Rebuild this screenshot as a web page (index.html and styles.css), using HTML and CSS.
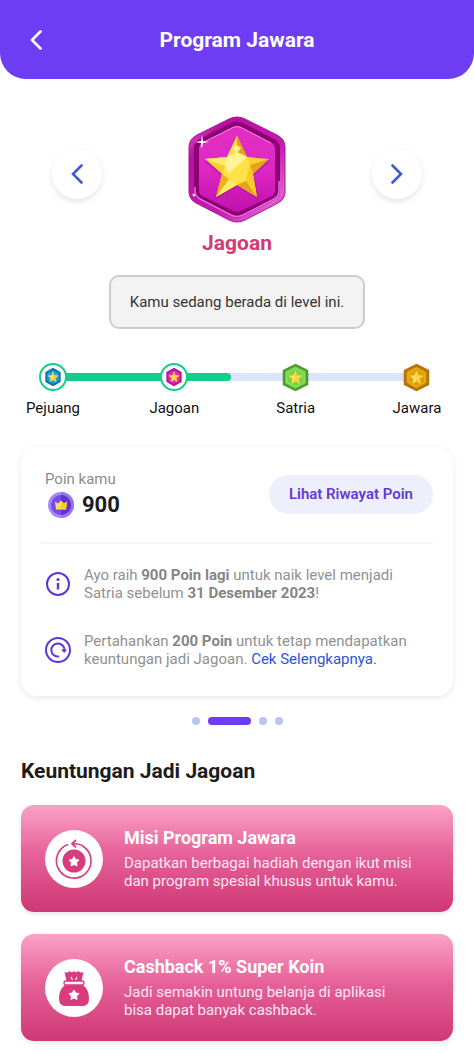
FILE: index.html
```html
<!DOCTYPE html>
<html lang="id">
<head>
<meta charset="utf-8">
<meta name="viewport" content="width=device-width, initial-scale=1">
<title>Program Jawara</title>
<link rel="stylesheet" href="styles.css">
</head>
<body>
<svg class="defs" aria-hidden="true">
  <defs>
    <linearGradient id="rim" x1="0" y1="0" x2="1" y2="1">
      <stop offset="0" stop-color="#e77bd6"/><stop offset=".2" stop-color="#b80fa0"/><stop offset=".6" stop-color="#c51bb0"/><stop offset=".85" stop-color="#e05bd0"/><stop offset="1" stop-color="#a00090"/>
    </linearGradient>
    <linearGradient id="face" x1="0" y1="0" x2="0" y2="1">
      <stop offset="0" stop-color="#e22fc0"/><stop offset=".5" stop-color="#df28c4"/><stop offset="1" stop-color="#c010ad"/>
    </linearGradient>
    <linearGradient id="gold" x1="0" y1="0" x2="0" y2="1">
      <stop offset="0" stop-color="#ffe64f"/><stop offset="1" stop-color="#f5b31b"/>
    </linearGradient>
    <symbol id="star" viewBox="0 0 24 24"><path d="M12 1l3 7.500 8 .6-6.200 5.200 2 7.900L12 18l-6.800 4.200 2-7.900L1 9.100l8-.6z" fill="#ffe052"/><path d="M12 1v12l3-4.500zM23 9.100L12 13l4.800 1.300zM18.800 22.200L12 13v5z" fill="#f8c440"/></symbol>
  </defs>
</svg>

<header class="topbar">
  <button class="back" type="button" aria-label="Kembali">
    <svg width="12" height="20" viewBox="0 0 12 20"><path d="M10.500 1.500L2 10l8.500 8.500" fill="none" stroke="currentColor" stroke-width="2.600" stroke-linecap="round" stroke-linejoin="round"/></svg>
  </button>
  <h1 class="topbar-title">Program Jawara</h1>
</header>

<main>
  <section class="hero">
    <button class="nav" type="button" aria-label="Level sebelumnya">
      <svg width="12" height="20" viewBox="0 0 12 20"><path d="M10.500 1.500L2 10l8.500 8.500" fill="none" stroke="currentColor" stroke-width="2.600" stroke-linecap="round"/></svg>
    </button>
    <div class="level">
      <svg width="98" height="108" viewBox="0 0 98 108" aria-hidden="true">
        <path d="M41 4Q49 0 57 4L89 20Q97 24 97 32V77Q97 84 90 88L57 105Q49 109 41 105L8 88Q1 84 1 77V32Q1 24 9 20Z" fill="url(#rim)" stroke="#ad1399" stroke-width="1"/>
        <path d="M43 8Q49 5 55 8L86 24Q92 27 92 33V76Q92 82 86 85L55 101Q49 104 43 101L12 85Q6 82 6 76V33Q6 27 12 24Z" fill="#8d0074"/>
        <path d="M7 72V76Q7 81 12 84L43 100Q49 103 55 100L86 84Q91 81 91 76V66" fill="none" stroke="#e96bd8" stroke-width="1.500"/>
        <path d="M45 12Q49 10 53 12L84 28Q87 30 87 34V75Q87 79 84 81L53 96Q49 98 45 96L14 81Q11 79 11 75V34Q11 30 14 28Z" fill="url(#face)"/>
        <path d="M12 32Q13 29 16 27L45 12.500Q49 10.500 53 12.500L83 28" fill="none" stroke="#f18ade" stroke-width="1"/>
        <path d="M49 24l11 20 22 2-16 15 5 24-22-13-22 13 6-24-17-15 22-2z" fill="#971098" opacity=".4"/>
        <path d="M49 21l10 21 22 2-16 15 4 23-20-12-21 12 6-23-17-15 22-2z" fill="url(#gold)"/>
        <path d="M49 21v16l10 5zM81 44L62 50l3 9zM69 82L58 66l-9 4z" fill="#e5a31c"/>
        <path d="M17 44l20 7 2-9zM28 82l21-12-8-6z" fill="#ffed69"/>
        <path d="M28 82l6-23 7 5z" fill="#eeb01e"/>
        <path d="M49 21l-10 21 10-5z" fill="#ffe03c"/>
        <path d="M39 42l10-5 10 5 3 8-4 16-9 4-8-6-7-5 3-8z" fill="#ffe14a"/>
        <path d="M39 42l10-5 10 5-18 16-4-7zM45 33l4-3 4 3-4 5z" fill="#fff7a8" opacity=".85"/>
        <path d="M62 50l3 9 4 23-11-16z" fill="#fbcb29"/>
        <path d="M14 20l1 6 6 1-6 1-1 6-1-6-6-1 6-1z" fill="#fff"/>
        <circle cx="6" cy="80" r="1.500" fill="#ffd7fa"/>
      </svg>
      <h2 class="level-name">Jagoan</h2>
    </div>
    <button class="nav" type="button" aria-label="Level berikutnya">
      <svg width="12" height="20" viewBox="0 0 12 20"><path d="M1.500 1.500L10 10l-8.500 8.500" fill="none" stroke="currentColor" stroke-width="2.600" stroke-linecap="round"/></svg>
    </button>
  </section>

  <p class="notice">Kamu sedang berada di level ini.</p>

  <section class="journey" aria-label="Level">
    <div class="track"><div class="track-fill"></div></div>
    <ol class="steps">
      <li class="step"><span class="medal done"><svg width="20" height="20" viewBox="0 0 28 30"><path d="M14 3l10 5.500v13L14 27 4 21.500v-13z" fill="#1ba4de" stroke="#0b74ac" stroke-width="3" stroke-linejoin="round"/><use href="#star" x="5" y="6" width="18" height="18"/></svg></span>Pejuang</li>
      <li class="step"><span class="medal done"><svg width="20" height="20" viewBox="0 0 28 30"><path d="M14 3l10 5.500v13L14 27 4 21.500v-13z" fill="#e22bc0" stroke="#b8159f" stroke-width="3" stroke-linejoin="round"/><use href="#star" x="5" y="6" width="18" height="18"/></svg></span>Jagoan</li>
      <li class="step"><span class="medal"><svg width="27" height="29" viewBox="0 0 28 30"><path d="M14 2l12 6v14l-12 6-12-6V8z" fill="#6fce3e" stroke="#4b9c2c" stroke-width="2.500" stroke-linejoin="round"/><path d="M14 5l9 5v10l-9 5-9-5V10z" fill="#78d546" stroke="#99e66a"/><use href="#star" x="6" y="7" width="16" height="16"/></svg></span>Satria</li>
      <li class="step"><span class="medal"><svg width="27" height="29" viewBox="0 0 28 30"><path d="M14 2l12 6v14l-12 6-12-6V8z" fill="#c98209" stroke="#b47409" stroke-width="2.500" stroke-linejoin="round"/><path d="M14 5l9 5v10l-9 5-9-5V10z" fill="#dea10b" stroke="#f4bd22"/><use href="#star" x="6" y="7" width="16" height="16"/></svg></span>Jawara</li>
    </ol>
  </section>

  <section class="card">
    <div class="points">
      <div>
        <p class="points-label">Poin kamu</p>
        <p class="points-value">
          <svg width="26" height="26" viewBox="0 0 26 26" aria-hidden="true"><circle cx="13" cy="13" r="13" fill="#a986f8"/><path d="M13 0a13 13 0 0 1 0 26z" fill="#9874ef"/><circle cx="13" cy="13" r="10" fill="#7649ea"/><path d="M13 3a10 10 0 0 1 0 20z" fill="#5f32d4"/><path d="M7 9.500l3 2 3-3 3 3 3-2-1 8H8z" fill="#ffe34b"/><path d="M13 8.500l3 3 3-2-1 8h-5z" fill="#fbc928"/></svg>
          900
        </p>
      </div>
      <button class="history" type="button">Lihat Riwayat Poin</button>
    </div>
    <div class="info">
      <svg width="26" height="26" viewBox="0 0 26 26" aria-hidden="true"><circle cx="13" cy="13" r="11" fill="none" stroke="#6035d8" stroke-width="2"/><circle cx="13" cy="8.500" r="1.500" fill="#6035d8"/><path d="M13 12v6.500" stroke="#6035d8" stroke-width="2.400"/></svg>
      <p>Ayo raih <b>900 Poin lagi</b> untuk naik level menjadi<br>Satria sebelum <b>31 Desember 2023</b>!</p>
    </div>
    <div class="info">
      <svg width="26" height="26" viewBox="0 0 26 26" aria-hidden="true"><circle cx="13" cy="13" r="12" fill="none" stroke="#6035d8" stroke-width="2"/><path d="M14 19.500A6.600 6.600 0 1 1 19.500 13" fill="none" stroke="#6035d8" stroke-width="2"/><path d="M16 12.500h6l-2.700 3.500z" fill="#6035d8"/></svg>
      <p>Pertahankan <b>200 Poin</b> untuk tetap mendapatkan<br>keuntungan jadi Jagoan. <a class="more" href="#keuntungan">Cek Selengkapnya.</a></p>
    </div>
  </section>

  <div class="dots" aria-hidden="true"><i class="dot"></i><i class="dot active"></i><i class="dot"></i><i class="dot"></i></div>

  <section class="benefits" id="keuntungan">
    <h2 class="section-title">Keuntungan Jadi Jagoan</h2>
    <article class="benefit">
      <svg width="58" height="58" viewBox="0 0 58 58" aria-hidden="true"><circle cx="29" cy="29" r="29" fill="#fff"/><circle cx="29" cy="31" r="11.500" fill="#d93b7e"/><path d="M23 14.500A17.300 17.300 0 1 0 38 16.200Q35 13.700 28 13.700" fill="none" stroke="#d93b7e" stroke-width="1.600"/><path d="M31 10l-4 3.700 4 3.600" fill="none" stroke="#d93b7e" stroke-width="1.800"/><path d="M29 26.500l1.600 3 3.400.6-2.400 2.400.4 3.400-3-1.400-3 1.400.4-3.400-2.400-2.400 3.400-.6z" fill="#fff" stroke="#fff" stroke-linejoin="round"/></svg>
      <div>
        <h3 class="benefit-title">Misi Program Jawara</h3>
        <p class="benefit-text">Dapatkan berbagai hadiah dengan ikut misi<br>dan program spesial khusus untuk kamu.</p>
      </div>
    </article>
    <article class="benefit">
      <svg width="58" height="58" viewBox="0 0 58 58" aria-hidden="true"><circle cx="29" cy="29" r="29" fill="#fff"/><path d="M19.500 13q3 1.500 5-1 2.500 2.500 4.500 0 2 2.500 4.500 0 2 2.500 5 1l-2 9h-15z" fill="#d93b7e"/><path d="M26 18l1.500 3M32 18l-1.500 3" stroke="#fff" stroke-width="1.200"/><rect x="19" y="22" width="20" height="4" rx="2" fill="#fff" stroke="#d93b7e" stroke-width="1.300"/><path d="M20 26h18q6 5 6 13 0 8-6 8H20q-6 0-6-8 0-8 6-13z" fill="#d93b7e"/><rect x="20" y="23" width="18" height="2" rx="1" fill="#fff"/><path d="M29 31l1.600 3 3.400.6-2.400 2.400.4 3.400-3-1.400-3 1.400.4-3.400-2.400-2.400 3.400-.6z" fill="#fff" stroke="#fff" stroke-linejoin="round"/></svg>
      <div>
        <h3 class="benefit-title">Cashback 1% Super Koin</h3>
        <p class="benefit-text">Jadi semakin untung belanja di aplikasi<br>bisa dapat banyak cashback.</p>
      </div>
    </article>
  </section>
</main>
</body>
</html>
```
FILE: styles.css
```css
* { box-sizing: border-box; }
body, h1, h2, h3, p, ol { margin: 0; padding: 0; }
body {
  background: #fff;
  color: #1c1c1e;
  font-family: Roboto, "Liberation Sans", sans-serif;
  font-size: 15px;
  line-height: 18px;
}
button { border: 0; padding: 0; font: inherit; cursor: pointer; }
svg { display: block; flex: none; }
.defs { position: absolute; width: 0; height: 0; }

.topbar {
  display: grid;
  grid-template-columns: 40px 1fr 40px;
  align-items: center;
  padding: 20px 16px 19px;
  background: #6e3cf2;
  border-radius: 0 0 26px 26px;
  color: #fff;
}
.back { display: grid; place-items: center; height: 40px; background: none; color: inherit; }
.topbar-title { font-size: 21px; line-height: 24px; text-align: center; }

.hero { display: flex; justify-content: space-between; align-items: flex-start; padding: 36px 52px 0; }
.nav {
  display: grid;
  place-items: center;
  width: 50px;
  height: 50px;
  margin-top: 34px;
  border-radius: 50%;
  background: #fff;
  color: #3c5bd2;
  box-shadow: 0 3px 6px rgba(0, 0, 0, .1);
}
.level { display: grid; justify-items: center; gap: 8px; }
.level-name { color: #d13a72; font-size: 21px; line-height: 24px; }

.notice {
  width: fit-content;
  margin: 20px auto 0;
  padding: 16px 19px;
  border: 2px solid #ccc;
  border-radius: 10px;
  background: #f3f3f3;
  color: #333;
}

.journey { display: grid; padding: 32px 29px 0 25px; }
.track, .steps { grid-area: 1 / 1; }
.track { height: 8px; margin: 12px 28px 0; border-radius: 4px; background: #dce3fb; }
.track-fill { width: 49%; height: 100%; border-radius: 4px; background: #10cf89; }
.steps { display: flex; justify-content: space-between; list-style: none; }
.step { display: grid; gap: 5px; justify-items: center; width: 56px; color: #111; line-height: 20px; z-index: 1; }
.medal { display: grid; place-items: center; width: 28px; height: 32px; }
.done { height: 28px; margin: 2px 0; border: 2px solid #10cf89; border-radius: 50%; background: #fff; }

.card {
  margin: 29px 21px 0;
  padding: 23px 20px 28px;
  border-radius: 16px;
  background: #fff;
  box-shadow: 0 2px 6px rgba(0, 0, 0, .09);
}
.points { display: flex; justify-content: space-between; align-items: center; padding: 0 0 24px 4px; border-bottom: 2px solid #f5f5f5; }
.points-label { color: #8c8c8c; }
.points-value { display: flex; align-items: center; gap: 8px; padding-left: 3px; margin-top: 4px; font-size: 22px; line-height: 26px; font-weight: 700; }
.history {
  padding: 10px 20px;
  border-radius: 20px;
  background: #edf0fc;
  color: #6438dc;
  font-weight: 600;
  line-height: 19px;
}
.info { display: flex; align-items: center; gap: 13px; padding: 0 0 0 4px; margin-top: 22px; color: #919191; }
.info + .info { margin-top: 30px; }
.info b { color: #858585; }
.more { color: #2d55dc; text-decoration: none; }

.dots { display: flex; justify-content: center; gap: 8px; margin-top: 21px; }
.dot { width: 8px; height: 8px; border-radius: 4px; background: #b9c5ef; }
.active { width: 43px; background: #6e3cf2; }

.benefits { display: grid; gap: 22px; padding: 34px 21px 11px; }
.section-title { font-size: 21px; line-height: 24px; }
.benefit {
  display: flex;
  align-items: center;
  gap: 21px;
  min-height: 107px;
  padding: 0 24px;
  border-radius: 13px;
  background: linear-gradient(#fba2c6, #e66299 45%, #cf3775);
  color: #ffe6f1;
  box-shadow: 0 2px 5px rgba(0, 0, 0, .1);
}
.benefit-title { margin-bottom: 5px; color: #fff; font-size: 18px; line-height: 22px; }
```
